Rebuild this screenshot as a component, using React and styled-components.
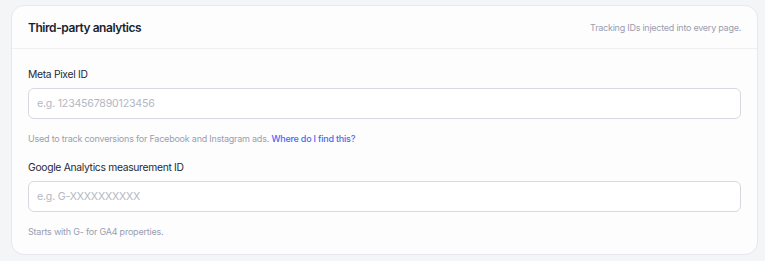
import React from "react";
import styled, { createGlobalStyle } from "styled-components";

const Global = createGlobalStyle`
  html, body { margin: 0; padding: 0; background: #f4f5f7; }
  body { font-family: Inter, "Noto Sans", sans-serif; -webkit-font-smoothing: antialiased; }
  * { box-sizing: border-box; }
`;

const Page = styled.div`
  padding: 5px 7px 7px 11px;
`;

const Card = styled.section`
  background: #fdfdfe;
  border: 1px solid #e6e8ee;
  border-radius: 13px;
  overflow: hidden;
`;

const Header = styled.header`
  display: flex;
  align-items: center;
  justify-content: space-between;
  height: 43px;
  padding: 0 16px;
  border-bottom: 1px solid #eef0f4;
`;

const Title = styled.h2`
  margin: 0;
  font-size: 12px;
  font-weight: 600;
  letter-spacing: -0.45px;
  color: #1c1f2b;
`;

const Aside = styled.span`
  font-size: 9px;
  letter-spacing: -0.25px;
  color: #9a9eae;
`;

const Body = styled.div`
  display: flex;
  flex-direction: column;
  gap: 13px;
  padding: 17px 16px 15px;
`;

const Field = styled.div`
  display: flex;
  flex-direction: column;
`;

const Label = styled.label`
  font-size: 10.3px;
  line-height: 16px;
  letter-spacing: -0.3px;
  color: #262a36;
  margin-bottom: 6px;
`;

const Input = styled.input`
  height: 31px;
  width: 100%;
  border: 1px solid #d7d9e0;
  border-radius: 6px;
  background: #fff;
  padding: 0 8px;
  font-family: inherit;
  font-size: 10.6px;
  letter-spacing: -0.2px;
  color: #262a36;
  outline: none;
  &::placeholder { color: #b4b7c3; }
`;

const Help = styled.p`
  margin: 13px 0 0;
  font-size: 9px;
  line-height: 14px;
  letter-spacing: -0.22px;
  color: #9a9eae;
`;

const HelpLink = styled.a`
  color: #4869f0;
  font-weight: 500;
  text-decoration: none;
`;

export default function App() {
  return (
    <>
      <Global />
      <Page>
        <Card>
          <Header>
            <Title>Third-party analytics</Title>
            <Aside>Tracking IDs injected into every page.</Aside>
          </Header>
          <Body>
            <Field>
              <Label>Meta Pixel ID</Label>
              <Input placeholder="e.g. 1234567890123456" />
              <Help>
                Used to track conversions for Facebook and Instagram ads.{" "}
                <HelpLink href="#">Where do I find this?</HelpLink>
              </Help>
            </Field>
            <Field>
              <Label>Google Analytics measurement ID</Label>
              <Input placeholder="e.g. G-XXXXXXXXXX" />
              <Help>Starts with G- for GA4 properties.</Help>
            </Field>
          </Body>
        </Card>
      </Page>
    </>
  );
}
